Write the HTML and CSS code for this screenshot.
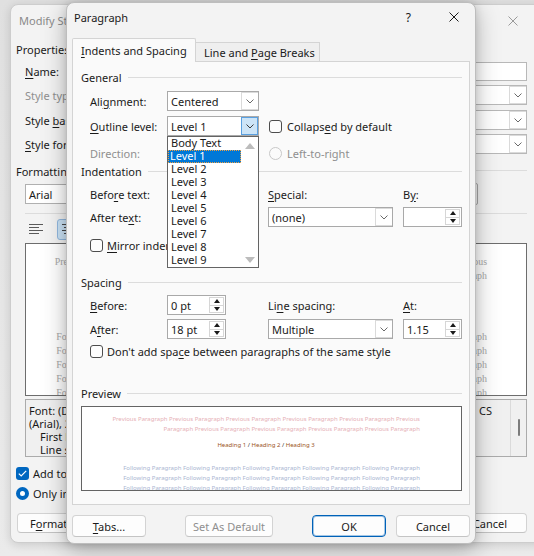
FILE: index.html
```html
<!DOCTYPE html>
<html>
<head>
<meta charset="utf-8">
<title>Paragraph</title>
<link rel="stylesheet" href="styles.css">
</head>
<body>
<div class="desktop">

  <section class="win modify">
    <div class="m-title">
      <span>Modify Style</span>
      <svg class="m-x" width="10" height="10" viewBox="0 0 10 10"><path d="M0.5 0.5L9.5 9.5M9.5 0.5L0.5 9.5" stroke="#9a9a9a" stroke-width="1"/></svg>
    </div>
    <div class="m-head">Properties</div>
    <div class="m-row r-name"><span><u>N</u>ame:</span><span class="m-input"></span></div>
    <div class="m-row r-type"><span class="dis">Style type:</span><span class="m-combo"><span class="cbtn"><svg width="8" height="5" viewBox="0 0 8 5"><path d="M0.5 0.5L4 4L7.5 0.5" fill="none" stroke="#6a6a6a"/></svg></span></span></div>
    <div class="m-row r-based"><span>Style <u>b</u>ased on:</span><span class="m-combo"><span class="cbtn"><svg width="8" height="5" viewBox="0 0 8 5"><path d="M0.5 0.5L4 4L7.5 0.5" fill="none" stroke="#6a6a6a"/></svg></span></span></div>
    <div class="m-row r-follow"><span><u>S</u>tyle for following paragraph:</span><span class="m-combo"><span class="cbtn"><svg width="8" height="5" viewBox="0 0 8 5"><path d="M0.5 0.5L4 4L7.5 0.5" fill="none" stroke="#6a6a6a"/></svg></span></span></div>
    <div class="m-head fmt">Formatting</div>
    <div class="m-row r-font"><span class="m-font">Arial</span><span class="m-tail"></span></div>
    <div class="m-sep"></div>
    <div class="m-row r-align">
      <svg class="al-left" width="14" height="11" viewBox="0 0 14 11"><path d="M0 0.5H14M0 3.5H10M0 6.5H14M0 9.5H10" stroke="#5a5a5a" stroke-width="1"/></svg>
      <span class="al-btn"><svg width="14" height="11" viewBox="0 0 14 11"><path d="M0 0.5H14M2 3.5H12M0 6.5H14M2 9.5H12" stroke="#4a4a4a" stroke-width="1"/></svg></span>
    </div>
    <div class="m-preview">
      <div class="pl">Previous Paragraph Previous Paragraph Previous Paragraph Previous Paragraph Previous Paragraph Previous</div>
      <div class="pl">Paragraph Previous Paragraph Previous Paragraph Previous Paragraph Previous Paragraph</div>
      <div class="pl pf fl">Following Paragraph Following Paragraph Following Paragraph Following Paragraph Following Paragraph</div>
      <div class="pl pf">Following Paragraph Following Paragraph Following Paragraph Following Paragraph Following Paragraph</div>
      <div class="pl pf">Following Paragraph Following Paragraph Following Paragraph Following Paragraph Following Paragraph</div>
      <div class="pl pf">Following Paragraph Following Paragraph Following Paragraph Following Paragraph Following Paragraph</div>
      <div class="pl pf">Following Paragraph Following Paragraph Following Paragraph Following Paragraph Following Paragraph</div>
    </div>
    <div class="m-desc">
      <div class="txt">
        <div class="dl"><span class="dl-l">Font: (Default) Arial, (Asian) +Body Asian</span><span class="dl-r">CS</span></div>
        <div class="dl">(Arial), 20 pt, Bold, Font color: Text 1, Centered</div>
        <div class="dl ind">First line:  0"</div>
        <div class="dl ind">Line spacing:  Multiple 1.15 li</div>
      </div>
      <div class="sb"><span class="thumb"></span></div>
    </div>
    <div class="m-check"><span class="cb-on"><svg width="9" height="7" viewBox="0 0 9 7"><path d="M0.8 3.6L3.2 6L8.2 0.8" fill="none" stroke="#fff" stroke-width="1.2"/></svg></span><span>Add to the Styles gallery</span></div>
    <div class="m-radio"><span class="rb-on"></span><span>Only in this document</span></div>
    <div class="m-btns"><span class="btn fmt-btn"><span>F<u>o</u>rmat ▾</span></span><span class="btn cnl-btn">Cancel</span></div>
  </section>

  <section class="win para">
    <div class="p-title">
      <span>Paragraph</span>
      <span class="help">?</span>
      <svg class="p-x" width="10" height="10" viewBox="0 0 10 10"><path d="M0.5 0.5L9.5 9.5M9.5 0.5L0.5 9.5" stroke="#1a1a1a" stroke-width="1"/></svg>
    </div>
    <div class="tabs">
      <div class="tab on"><span><u>I</u>ndents and Spacing</span></div>
      <div class="tab off"><span>Line and <u>P</u>age Breaks</span></div>
    </div>
    <div class="panel">
      <div class="sec s-gen">General</div>
      <div class="grid g-align">
        <span>Ali<u>g</u>nment:</span>
        <div class="combo w92"><span class="cv">Centered</span><span class="cbtn"><svg width="8" height="5" viewBox="0 0 8 5"><path d="M0.5 0.5L4 4L7.5 0.5" fill="none" stroke="#6a6a6a"/></svg></span></div>
      </div>
      <div class="grid g-outline">
        <span><u>O</u>utline level:</span>
        <div class="combo w92"><span class="cv">Level 1</span><span class="cbtn hot"><svg width="8" height="5" viewBox="0 0 8 5"><path d="M0.5 0.5L4 4L7.5 0.5" fill="none" stroke="#3a3a3a"/></svg></span></div>
        <div class="chk c3"><span class="cb"></span><span>Collaps<u>e</u>d by default</span></div>
      </div>
      <div class="grid g-dir">
        <span class="dis">Direction:</span>
        <span></span>
        <div class="chk c3 dis"><span class="rb"></span><span>Left-to-right</span></div>
      </div>
      <div class="sec s-ind">Indentation</div>
      <div class="grid g-ind1">
        <span>Befo<u>r</u>e text:</span>
        <div class="spin"><span class="sv"></span><span class="arr"><span class="up"></span><span class="dn"></span></span></div>
        <span><u>S</u>pecial:</span>
        <span>B<u>y</u>:</span>
      </div>
      <div class="grid g-ind2">
        <span>After te<u>x</u>t:</span>
        <div class="spin"><span class="sv"></span><span class="arr"><span class="up"></span><span class="dn"></span></span></div>
        <div class="combo w125"><span class="cv">(none)</span><span class="cbtn"><svg width="8" height="5" viewBox="0 0 8 5"><path d="M0.5 0.5L4 4L7.5 0.5" fill="none" stroke="#6a6a6a"/></svg></span></div>
        <div class="spin"><span class="sv"></span><span class="arr"><span class="up"></span><span class="dn"></span></span></div>
      </div>
      <div class="grid g-mirror">
        <div class="chk span"><span class="cb"></span><span><u>M</u>irror indents</span></div>
      </div>
      <div class="sec s-sp">Spacing</div>
      <div class="grid g-sp1">
        <span><u>B</u>efore:</span>
        <div class="spin"><span class="sv">0 pt</span><span class="arr"><span class="up"></span><span class="dn"></span></span></div>
        <span>Li<u>n</u>e spacing:</span>
        <span><u>A</u>t:</span>
      </div>
      <div class="grid g-sp2">
        <span>A<u>f</u>ter:</span>
        <div class="spin"><span class="sv">18 pt</span><span class="arr"><span class="up"></span><span class="dn"></span></span></div>
        <div class="combo w125"><span class="cv">Multiple</span><span class="cbtn"><svg width="8" height="5" viewBox="0 0 8 5"><path d="M0.5 0.5L4 4L7.5 0.5" fill="none" stroke="#6a6a6a"/></svg></span></div>
        <div class="spin"><span class="sv">1.15</span><span class="arr"><span class="up"></span><span class="dn"></span></span></div>
      </div>
      <div class="grid g-dont">
        <div class="chk span"><span class="cb"></span><span>Don't add spa<u>c</u>e between paragraphs of the same style</span></div>
      </div>
      <div class="sec s-prev">Preview</div>
      <div class="preview">
        <div class="pv prev">Previous Paragraph Previous Paragraph Previous Paragraph Previous Paragraph Previous Paragraph Previous</div>
        <div class="pv prev">Paragraph Previous Paragraph Previous Paragraph Previous Paragraph Previous Paragraph</div>
        <div class="pv head"><span class="hw">Heading 1</span> / <span class="hw">Heading 2</span> / <span class="hw">Heading 3</span></div>
        <div class="pv foll first">Following Paragraph Following Paragraph Following Paragraph Following Paragraph Following Paragraph</div>
        <div class="pv foll">Following Paragraph Following Paragraph Following Paragraph Following Paragraph Following Paragraph</div>
        <div class="pv foll">Following Paragraph Following Paragraph Following Paragraph Following Paragraph Following Paragraph</div>
      </div>
    </div>
    <div class="p-btns">
      <span class="btn b-tabs"><span><u>T</u>abs...</span></span>
      <span class="btn b-def dis">Set As Default</span>
      <span class="btn b-ok">OK</span>
      <span class="btn b-cancel">Cancel</span>
    </div>

    <div class="dropdown">
      <div class="opts">
        <div class="opt">Body Text</div>
        <div class="opt sel">Level 1</div>
        <div class="opt">Level 2</div>
        <div class="opt">Level 3</div>
        <div class="opt">Level 4</div>
        <div class="opt">Level 5</div>
        <div class="opt">Level 6</div>
        <div class="opt">Level 7</div>
        <div class="opt">Level 8</div>
        <div class="opt">Level 9</div>
      </div>
      <div class="dd-sb">
        <svg width="10" height="6" viewBox="0 0 10 6"><path d="M0 6L5 0L10 6Z" fill="#bcbcbc"/></svg>
        <svg width="10" height="6" viewBox="0 0 10 6"><path d="M0 0L5 6L10 0Z" fill="#bcbcbc"/></svg>
      </div>
    </div>
  </section>

</div>
</body>
</html>
```

FILE: styles.css
```css
* { box-sizing: border-box; }
html, body { margin: 0; padding: 0; }
body {
  width: 534px;
  height: 556px;
  overflow: hidden;
  font-family: "Noto Sans", "Open Sans", sans-serif;
  font-size: 11px;
  color: #1a1a1a;
  background: #e8e8e8;
}
u { text-decoration: underline; text-underline-offset: 2px; text-decoration-thickness: 1px; }
.dis { color: #8f8f8f; }

.desktop {
  position: relative;
  width: 534px;
  height: 556px;
  overflow: hidden;
  background: linear-gradient(#e0e0e0, #ebebeb);
}
.win { position: absolute; border-radius: 8px; background: #f3f3f3; }

/* ---------- background dialog: Modify Style ---------- */
.modify {
  left: 10px;
  top: 4px;
  width: 540px;
  height: 539px;
  border: 1px solid #cdcdcd;
  padding: 0 22px 0 5px;
  box-shadow: 0 2px 10px rgba(0,0,0,0.14);
  white-space: nowrap;
}
.m-title { height: 31px; display: flex; align-items: center; padding-left: 3px; color: #8a8a8a; }
.m-x { margin-left: auto; margin-right: 9px; }
.m-head { height: 16px; margin-top: 5px; display: flex; align-items: center; }
.m-head.fmt { margin-top: 9px; }
.m-head.fmt::after { content: ""; flex: 1; height: 1px; background: #dcdcdc; margin-left: 8px; margin-top: -2px; }
.m-row { display: flex; align-items: center; height: 20px; padding-left: 9px; }
.r-name { margin-top: 5px; height: 19px; }
.r-type { margin-top: 4px; }
.r-based { margin-top: 5px; }
.r-follow { margin-top: 4px; }
.r-font { margin-top: 5px; }
.r-align { margin-top: 5px; }
.m-input { margin-left: auto; width: 390px; height: 19px; border: 1px solid #b8b8b8; background: #fff; }
.m-combo {
  margin-left: auto; width: 390px; height: 20px; border: 1px solid #b8b8b8; background: #fff;
  display: flex; justify-content: flex-end; align-items: center;
}
.m-font {
  width: 150px; height: 20px; border: 1px solid #b0b0b0; background: #fff;
  display: flex; align-items: center; padding-left: 3px;
}
.m-tail { margin-left: auto; margin-right: 49px; width: 60px; height: 22px; border: 1px solid #a8a8a8; border-radius: 2px; }
.m-sep { margin: 9px 0 0 9px; height: 1px; background: #dcdcdc; }
.al-left { margin-left: 4px; }
.al-btn {
  margin-left: 14px; width: 24px; height: 21px; border: 1px solid #92b9e0; border-radius: 3px;
  background: #cce4f7; display: flex; align-items: center; justify-content: center;
}
.m-preview {
  margin: 4px 0 0 9px; height: 153px; border: 1px solid #6d6d6d; background: #fff;
  padding: 11px 39px 0 0; overflow: hidden;
  font-family: "Liberation Serif", serif; font-size: 9.9px; color: #a8a8a8;
  text-align: right; line-height: 14px;
}
.m-preview .pl { white-space: nowrap; }
.m-preview .pf { font-size: 10px; }
.m-preview .fl { margin-top: 47px; }
.m-desc {
  margin: 3px 0 0 9px; height: 58px; border: 1px solid #ababab; background: #f0f0f0;
  display: flex;
}
.m-desc .txt { flex: 1; padding: 4px 0 0 3px; line-height: 13px; overflow: hidden; }
.m-desc .dl { display: flex; white-space: nowrap; }
.m-desc .dl-l { flex: 1; overflow: hidden; }
.m-desc .dl-r { margin-right: 18px; }
.m-desc .ind { padding-left: 11px; }
.m-desc .sb { width: 16px; border-left: 1px solid #dadada; display: flex; justify-content: center; padding-top: 19px; }
.m-desc .thumb { width: 2px; height: 17px; background: #7c7c7c; border-radius: 1px; }
.m-check { margin-top: 10px; height: 13px; display: flex; align-items: center; gap: 4px; }
.m-radio { margin-top: 7px; height: 13px; display: flex; align-items: center; gap: 4px; }
.cb-on {
  width: 13px; height: 13px; border-radius: 3px; background: #0067c0;
  display: flex; align-items: center; justify-content: center;
}
.rb-on {
  width: 13px; height: 13px; border-radius: 50%; background: #fff;
  border: 4px solid #0067c0;
}
.m-btns { margin-top: 13px; height: 20px; display: flex; justify-content: space-between; padding-left: 1px; }
.btn {
  display: flex; align-items: center; justify-content: center;
  background: #fdfdfd; border: 1px solid #d3d3d3; border-bottom-color: #c4c4c4; border-radius: 4px;
}
.fmt-btn { width: 84px; justify-content: flex-start; padding-left: 12px; }
.cnl-btn { width: 74px; }

/* ---------- foreground dialog: Paragraph ---------- */
.para {
  left: 66px;
  top: 2px;
  width: 410px;
  height: 542px;
  border: 1px solid #bdbdbd;
  padding: 0 5px;
  box-shadow: 0 6px 24px rgba(0,0,0,0.28), 0 0 8px rgba(0,0,0,0.12);
  white-space: nowrap;
}
.p-title { height: 28px; display: flex; align-items: center; padding-left: 2px; }
.help { margin-left: auto; font-size: 12px; margin-right: 38px; }
.p-x { margin-right: 11px; }
.tabs { margin-top: 7px; height: 23px; display: flex; align-items: flex-end; }
.tab { width: 124px; padding-left: 8px; }
.tab.on {
  height: 24px; margin-bottom: -1px; position: relative; z-index: 1;
  background: #fafafa; border: 1px solid #d4d4d4; border-bottom: none;
  border-radius: 2px 2px 0 0; padding-top: 4px;
}
.tab.off {
  height: 19px; background: #efefef; border: 1px solid #d4d4d4; border-left: none; border-bottom: none;
  display: flex; align-items: center;
}
.panel {
  height: 444px; border: 1px solid #d4d4d4; background: #fafafa;
  padding: 0 7px 0 8px;
}
.sec { height: 16px; display: flex; align-items: center; }
.sec::after { content: ""; flex: 1; height: 1px; background: #dcdcdc; margin-left: 6px; }
.s-gen { margin-top: 7px; }
.s-ind { margin-top: 0; }
.s-sp { margin-top: 21px; }
.s-prev { margin-top: 26px; }

.grid {
  display: grid;
  grid-template-columns: 77px 101px 135px 59px;
  align-items: center;
  padding-left: 9px;
  height: 20px;
}
.g-align { margin-top: 6px; }
.g-outline { margin-top: 5px; }
.g-dir { margin-top: 7px; }
.g-ind1 { margin-top: 5px; }
.g-ind2 { margin-top: 3px; }
.g-mirror { margin-top: 10px; height: 16px; }
.g-sp1 { margin-top: 5px; }
.g-sp2 { margin-top: 4px; }
.g-dont { margin-top: 4px; height: 16px; }

.combo {
  height: 20px; border: 1px solid #a9a9a9; background: #fff;
  display: flex; align-items: center; padding-left: 3px;
}
.w92 { width: 92px; }
.w125 { width: 125px; }
.cv { flex: 1; overflow: hidden; }
.cbtn {
  width: 17px; height: 18px; border: 1px solid #dadada; border-right: none;
  display: flex; align-items: center; justify-content: center; background: #fff;
}
.cbtn.hot { background: #cce4f7; border: 1px solid #5aa0e0; }

.spin {
  width: 59px; height: 20px; border: 1px solid #a9a9a9; background: #fff;
  display: flex; align-items: center; padding-left: 3px;
}
.sv { flex: 1; }
.arr {
  width: 15px; height: 16px; margin-right: 1px; border: 1px solid #d6d6d6;
  display: flex; flex-direction: column;
}
.arr .up, .arr .dn { flex: 1; display: flex; align-items: center; justify-content: center; }
.arr .dn { border-top: 1px solid #d6d6d6; }
.arr .up::before {
  content: ""; border-left: 3px solid transparent; border-right: 3px solid transparent;
  border-bottom: 4px solid #1a1a1a;
}
.arr .dn::before {
  content: ""; border-left: 3px solid transparent; border-right: 3px solid transparent;
  border-top: 4px solid #1a1a1a;
}

.chk { display: flex; align-items: center; gap: 5px; }
.chk.c3 { margin-left: 1px; }
.chk.span { grid-column: 1 / -1; gap: 4px; }
.cb { width: 13px; height: 13px; border: 1px solid #4d4d4d; border-radius: 3px; background: #fdfdfd; }
.rb { width: 13px; height: 13px; border: 1px solid #c8c8c8; border-radius: 50%; background: #fbfbfb; }

.preview {
  margin-top: 5px; height: 85px; border: 1px solid #646464; background: #fff;
  padding: 7px 41px 0 0; overflow: hidden;
  font-size: 6px; line-height: 10px; text-align: right;
}
.pv { white-space: nowrap; }
.prev { color: #e6b0b6; }
.foll { color: #aab6d2; }
.foll.first { margin-top: 13px; }
.head { margin-top: 6px; text-align: center; padding-left: 30px; color: #333; }
.hw { color: #9b5424; }

.p-btns { margin-top: 10px; height: 22px; display: flex; }
.b-tabs { width: 74px; }
.b-def { width: 88px; margin-left: 39px; }
.b-ok { width: 74px; margin-left: 39px; border: 1px solid #0062b8; box-shadow: inset 0 0 0 1px rgba(0,98,184,0.35); }
.b-cancel { width: 74px; margin-left: 10px; }

.dropdown {
  position: absolute; left: 100px; top: 133px; width: 92px; height: 132px;
  border: 1px solid #646464; background: #fff; z-index: 5;
  display: flex;
}
.opts { width: 73px; }
.opt { height: 13px; line-height: 12px; padding-left: 3px; }
.opt.sel { background: #0078d7; color: #fff; outline: 1px dotted #f0a040; outline-offset: -1px; padding-left: 2px; }
.dd-sb { flex: 1; display: flex; flex-direction: column; justify-content: space-between; align-items: center; padding: 6px 0 4px; }
```
